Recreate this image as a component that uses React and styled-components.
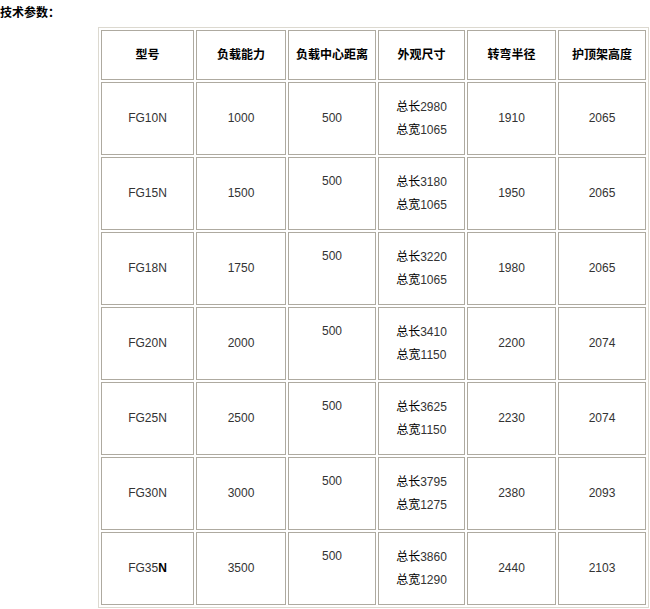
import React from "react";
import styled, { createGlobalStyle } from "styled-components";

const Global = createGlobalStyle`
  html, body { margin: 0; padding: 0; background: #fff; }
  body { font-family: "Liberation Sans", Arial, "Noto Sans CJK SC", sans-serif; }
`;

const Page = styled.div`
  width: 650px;
  height: 609px;
  overflow: hidden;
`;

const Title = styled.div`
  font-family: "Noto Sans CJK SC", sans-serif;
  font-weight: 700;
  font-size: 12px;
  line-height: 24px;
  height: 24px;
  color: #000;
`;

const Table = styled.table`
  margin: 3px 0 0 98px;
  border: 1px solid #dcd9d0;
  border-spacing: 2px;
  table-layout: fixed;
  width: 551px;
`;

const Col = styled.col``;

const Th = styled.th`
  box-sizing: border-box;
  height: 50px;
  border: 1px solid #aeaaa0;
  padding: 0 0 3px;
  font-family: "Noto Sans CJK SC", sans-serif;
  font-size: 12px;
  font-weight: 700;
  color: #000;
  text-align: center;
  vertical-align: middle;
`;

const Td = styled.td`
  box-sizing: border-box;
  height: 73px;
  border: 1px solid #aeaaa0;
  padding: 0;
  font-family: "Liberation Sans", Arial, "Noto Sans CJK SC", sans-serif;
  font-size: 12px;
  line-height: 23px;
  color: #333;
  text-align: center;
  vertical-align: middle;
`;

const Raised = styled.div`
  padding-bottom: ${(p) => (p.$raised ? "24px" : "0")};
`;

const DimLine = styled.div`
  height: 23px;
  line-height: 23px;
  overflow: visible;
`;

const Cn = styled.span`
  font-family: "Noto Sans CJK SC", sans-serif;
  color: #000;
  line-height: 1;
`;

const Strong = styled.b`
  color: #000;
`;

const widths = [93, 90, 88, 87, 89, 88];
const headers = ["型号", "负载能力", "负载中心距离", "外观尺寸", "转弯半径", "护顶架高度"];

const rows = [
  { m: "FG10N", cap: "1000", len: "2980", wid: "1065", r: "1910", h: "2065", raised: false },
  { m: "FG15N", cap: "1500", len: "3180", wid: "1065", r: "1950", h: "2065", raised: true },
  { m: "FG18N", cap: "1750", len: "3220", wid: "1065", r: "1980", h: "2065", raised: true },
  { m: "FG20N", cap: "2000", len: "3410", wid: "1150", r: "2200", h: "2074", raised: true },
  { m: "FG25N", cap: "2500", len: "3625", wid: "1150", r: "2230", h: "2074", raised: true },
  { m: "FG30N", cap: "3000", len: "3795", wid: "1275", r: "2380", h: "2093", raised: true },
  { m: "FG35", bold: "N", cap: "3500", len: "3860", wid: "1290", r: "2440", h: "2103", raised: true },
];

export default function App() {
  return (
    <Page>
      <Global />
      <Title>技术参数：</Title>
      <Table>
        <colgroup>
          {widths.map((w, i) => (
            <Col key={i} style={{ width: w }} />
          ))}
        </colgroup>
        <thead>
          <tr>
            {headers.map((h) => (
              <Th key={h}>{h}</Th>
            ))}
          </tr>
        </thead>
        <tbody>
          {rows.map((r) => (
            <tr key={r.m + (r.bold || "")}>
              <Td>
                {r.m}
                {r.bold && <Strong>{r.bold}</Strong>}
              </Td>
              <Td>{r.cap}</Td>
              <Td>
                <Raised $raised={r.raised}>500</Raised>
              </Td>
              <Td>
                <DimLine>
                  <Cn>总长</Cn>
                  {r.len}
                </DimLine>
                <DimLine>
                  <Cn>总宽</Cn>
                  {r.wid}
                </DimLine>
              </Td>
              <Td>{r.r}</Td>
              <Td>{r.h}</Td>
            </tr>
          ))}
        </tbody>
      </Table>
    </Page>
  );
}
